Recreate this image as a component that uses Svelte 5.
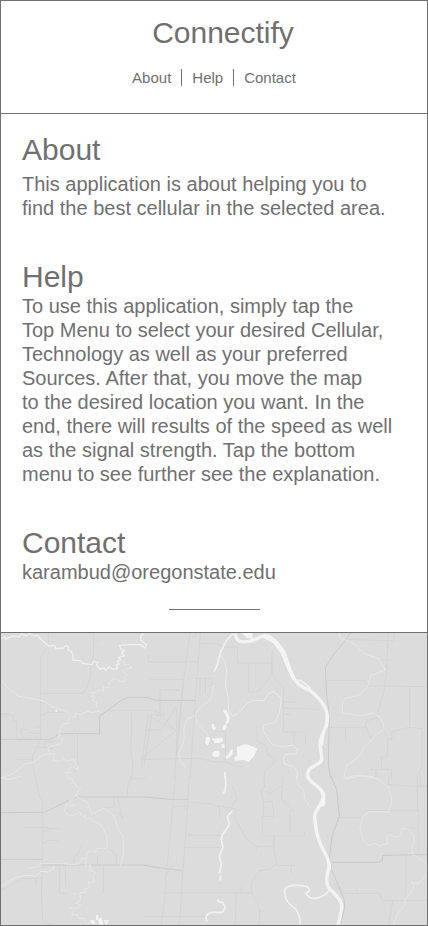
<script>
  const links = [
    { label: 'About', href: '#about' },
    { label: 'Help', href: '#help' },
    { label: 'Contact', href: '#contact' }
  ];
</script>

<div class="app">
  <header>
    <h1>Connectify</h1>
    <nav aria-label="Main">
      {#each links as link}
        <a href={link.href}>{link.label}</a>
      {/each}
    </nav>
  </header>

  <main>
    <section id="about" class="spaced">
      <h2>About</h2>
      <p>This application is about helping you to<br />find the best cellular in the selected area.</p>
    </section>
    <section id="help">
      <h2>Help</h2>
      <p>
        To use this application, simply tap the<br />Top Menu to select your desired Cellular,<br />Technology
        as well as your preferred<br />Sources. After that, you move the map<br />to the desired location you want.
        In the<br />end, there will results of the speed as well<br />as the signal strength. Tap the bottom<br />menu
        to see further see the explanation.
      </p>
    </section>
    <section id="contact">
      <h2>Contact</h2>
      <p><a href="mailto:karambud@oregonstate.edu">karambud@oregonstate.edu</a></p>
    </section>
    <hr />
  </main>

  <svg class="map" viewBox="3 15 1278 876" role="img" aria-label="Map">
    <rect x="0" y="0" width="1284" height="900" fill="#dcdcdc" />

    <!-- north west -->
    <g>
      <g class="road">
        <path d="M145 15V55L122 84V335L98 382L97 405L106 450" />
        <path d="M122 196H248L258 184L272 144V110L280 90V15M280 34L296 39" />
        <path d="M445 82V102H594M452 154H550M600 46H642M586 151H634V172L622 176M616 151V198L628 205M600 151V204" />
        <path d="M3 334H150L180 317H299V264L330 242L366 215L384 208H440L467 217H586" class="major" />
        <path d="M320 248H470V265M395 250L393 380L398 400L396 450M232 317V406M122 263L145 253H190M3 258H22L14 270M22 258L40 265V280H50V334M75 332L63 317V304H82L96 316H122M46 394H96M108 358H136M134 340H158V360H134ZM105 294L121 300" />
        <path d="M480 263V186H540M444 264L424 416M442 262L528 308L426 390M472 250L528 308M440 306L482 306L512 264L526 238M455 258L432 416M468 264L494 256M482 250V266M490 250V266" />
        <path d="M424 394L600 391L642 402M530 238V390" />
        <path d="M601 15L586 217L574 392L571 450M570 15L545 200L528 390L523 450M550 165L530 380M576 28L590 22" />
      </g>
      <path class="creek strong" d="M3 32L14 26L16 34L38 24L56 26L66 17L78 24L88 16L102 24L112 22L122 34L133 42L146 54L164 52L168 62L190 60L198 53L206 57L204 66L214 70L220 84L218 96L240 98L250 106L276 110L280 100L294 103L290 112L300 123L312 120L318 127L328 116L338 124L352 122L350 110L358 110L352 100L362 96L355 88L374 84L364 76L372 68L362 62L358 52L386 50H420L434 60L440 51L432 44L422 36V26L430 16" />
      <path class="creek" d="M366 98L374 104L370 112L384 108L396 119L382 122L366 126L374 136L382 142L374 146L376 158L366 162L346 150L334 156L326 168L328 180L310 176L312 188L294 186L284 194L274 192L282 202L274 206L288 208L276 216L288 220L290 236L298 250L276 254L264 250L240 260L226 254L226 270L212 262L208 268L204 286L190 288L180 302V316L174 328L188 332L182 346L164 352L144 358L148 376L164 378L158 398L182 400L190 392L200 400L222 394L230 410L234 425L216 416L204 424L212 434L196 434L206 446" />
      <path class="creek" d="M3 155L20 176L56 205L100 212L132 220L162 238L200 250L212 264M3 450L40 437L76 408L100 402L130 380L150 380" />
      <path class="creek" d="M642 170L632 214L600 240L586 260L592 290L620 314L630 340M582 264L560 274L552 300V338L536 380L542 400L558 420" />
      <path class="water" d="M166 246L172 245V251L167 252ZM635 290L642 287V305L636 302ZM618 328L628 326L630 336L624 354L616 346ZM635 333L642 331V340ZM636 374L642 372V386L637 384Z" />
    </g>

    <!-- north east -->
    <g transform="translate(642 0)">
      <g class="road">
        <path d="M0 44L34 57H70V105H174V138L208 180V312H274V348M174 70V138L134 190L104 193V105M208 222H246M208 241L316 244M208 259H228M232 312V320M240 312V348" />
        <path d="M408 15L394 38L360 78L334 118L338 200L346 260L343 412L350 450" class="major" />
        <path d="M402 34L520 38H540V15M522 15L518 130L510 190L488 268L510 310L520 332L534 336V310L587 298L624 302V420L616 430L618 450" />
        <path d="M338 157H450L462 174L642 176M587 176V298M500 96H520M344 298H452M394 298V342M488 270L460 278L454 292L470 332M520 336V386H502V424H470M486 424V450M502 424H532V450" />
        <path d="M127 292L130 340L160 356L158 376L182 392L174 412L152 428V450M0 310H34V400L60 414L90 416M0 402H34M344 360L330 366M520 54L534 68" />
      </g>
      <path class="creek" d="M376 15L376 28L394 36L424 50L452 78L494 92L514 126L470 142L460 178L434 202L396 210L386 222L384 254L440 263L480 254L490 264H496L508 284V306L494 314L448 360L440 380L396 414L390 450M396 448L430 442L480 446" />
      <path class="creek mid" d="M20 80L34 104L38 134L34 168L42 206L44 248L56 264L72 256L100 226L122 216L150 218L164 196L178 191L202 210L196 256L184 284L148 290L146 306L174 348L196 356L238 352L252 366L246 378L216 378L208 392L212 408L240 416L250 430V450" />
      <path class="creek river-thin" d="M58 17L38 36L20 72L10 110L0 132" />
      <path class="river" d="M64 16C66 40 80 43 96 41C122 42 134 22 152 24C178 28 188 44 200 60C222 90 224 128 240 152C258 182 276 178 294 192C326 220 340 244 340 266C342 296 318 326 318 348C318 370 326 382 322 398C310 418 280 410 280 446" />
      <path class="water" d="M82 15H114L117 33L100 30ZM142 26L162 18L190 38L214 70L232 124L246 152L235 156L220 124L200 76L178 46ZM318 330L332 305L328 350L320 358ZM336 250L346 262L342 298L334 300Z" />
      <path class="creek river-thin" d="M240 158H262L290 182" />
      <path class="water" d="M26 246L36 245L47 266L44 286L34 288L39 270ZM28 292L38 289V300L30 307L25 304ZM0 293L6 300L3 306H0ZM0 332L24 329L28 338L16 345L0 346ZM22 348L32 350V360L23 359ZM0 369L14 368L18 378L12 387L0 386ZM50 366L57 364L55 380L44 390L36 392L34 386L44 378ZM68 357L96 348L130 362L120 384L104 402L88 396L64 399L60 390L70 382Z" />
      <path class="creek river-thin" d="M32 432L34 450" />
    </g>

    <!-- south west -->
    <g transform="translate(0 444)">
      <g class="road">
        <path d="M106 0L118 60L128 76V268L124 350L128 432L138 443L158 446" />
        <path d="M3 110L134 109L220 66L232 63H440L510 70H563M3 250H128M128 267H430L470 274L549 284" class="major" />
        <path d="M69 155H128L178 158M128 167L160 158M128 203L146 193H174M68 307H124M108 307V328M3 342L40 324L68 307M178 267V352H202M196 267V332M310 267V352M244 210L232 236L222 242V267M326 216L350 238V267M292 240V267" />
        <path d="M394 0L382 36V63M394 8H432L440 0M342 66V92L310 96M354 66L368 128L356 110M563 78L642 84M560 177H642M554 214H642M494 351H642M430 421H642" />
        <path d="M568 0L563 90L549 284L538 446M527 0L520 70L500 284L494 370L484 446M520 92H554V100H562V88H554M498 278L508 280L502 296" />
      </g>
      <path class="creek" d="M196 0L204 8L220 10L216 22L226 20L228 30L242 36L232 44L228 60L210 72L212 82L224 86L218 92L198 84L192 106L210 120L228 116L238 108L248 122L258 118L256 130L270 126L280 134L306 150L320 180L322 216L290 218L286 230L272 224L258 232L262 246L250 246L234 264L214 266L190 263L120 262L106 274L82 276M228 60L248 72L262 78L276 114L312 96L344 122L354 158L370 182V230L362 272" />
      <path class="creek mid" d="M3 332L40 308L76 298H96L104 302L122 286L146 288L160 278L162 268M3 4L24 10L40 8L62 0" />
      <path class="creek" d="M256 248L258 272L272 266L270 284L286 290L278 304L284 318L264 320L270 334L252 340L260 348L240 350L242 372L226 382L242 386L230 398L210 394L222 406L214 418L232 414L236 428L252 426L256 438L270 444M218 352L230 354" />
      <path class="water" d="M288 418L294 416L296 428L288 432ZM270 434L280 431L288 444H276ZM294 432L304 424L310 446H298ZM312 433L328 432L318 446Z" />
      <path class="creek river-thin" d="M642 409C624 408 612 420 622 436" />
    </g>

    <!-- south east -->
    <g transform="translate(642 444)">
      <g class="road">
        <path d="M350 0L368 40L376 120L354 180L346 250L352 278L390 370L392 394L380 446" class="major" />
        <path d="M352 259H494L506 252V238L642 236" class="major" />
        <path d="M374 125H436L456 103H614V236M524 0V26L614 31H642M610 0V103M619 4V30H642M575 236V373M578 153L608 158M380 352H496L506 373H642M428 332V352M536 373L524 446" />
        <path d="M150 0L152 34L142 44L148 80L174 74L180 121H146V180H272V166M148 80V121M152 46L168 54L190 38L206 28V0M206 28L202 70L238 104H228V168M0 88L54 96L76 103M64 104V128L96 188L124 211H178M128 211V226M180 180V220L188 264L168 280L136 284L112 322L114 354L128 372L136 402V446M136 402L150 408M188 268H242M232 268V294M0 351H112M66 351L64 446M82 324V351M56 30L68 68L54 90M14 88L18 130M0 178L22 179M0 214H18" />
        <path d="M356 290L380 340M362 325H376M364 336H382" />
      </g>
      <path class="creek" d="M388 4L400 8L440 0L492 8L526 38L534 76L524 108L468 106L446 120L438 156L446 190L462 208L486 202L494 210L522 202L518 182L528 176L546 184L560 180L564 160L580 158L602 182L596 208L594 234L624 252L640 268V294L612 324L592 318L600 330L592 346L574 370L570 392L550 412L538 446M246 0L252 26L268 40L274 72L292 98" />
      <path class="creek river-thin" d="M34 0L36 26L32 46L25 54M54 106L40 122L46 146L24 178L22 194L27 214L16 242L22 266L16 292M20 298L18 314M0 409H26L34 394L26 380L12 376L11 370" />
      <path class="creek river-thin" d="M346 342C326 370 288 376 276 352C284 348 292 344 280 332C252 326 212 326 212 344C212 374 226 384 246 400C258 420 260 434 258 446" />
      <path class="river" d="M280 0C292 28 326 32 328 58C326 88 302 100 302 122C304 166 316 202 330 226C346 250 344 260 346 270C332 310 338 330 350 342C374 364 388 380 382 402L373 446" />
      <path class="water" d="M318 38L334 52V88L324 92L316 90L326 70ZM338 246L350 260L352 280L342 286Z" />
    </g>
  </svg>
</div>

<style>
  :global(body) {
    margin: 0;
    background: #fff;
  }

  .app {
    box-sizing: border-box;
    border: 1px solid #707070;
    background: #fff;
    color: #707070;
    font-family: 'Helvetica Neue', 'Liberation Sans', Arial, sans-serif;
  }

  h1,
  h2,
  p {
    margin: 0;
    font-weight: 400;
  }

  h1,
  h2 {
    font-size: 30px;
    line-height: 34px;
  }

  a {
    color: inherit;
    text-decoration: none;
  }

  header {
    display: flex;
    flex-direction: column;
    align-items: center;
    gap: 19px;
    padding: 15px 0 27px;
    border-bottom: 1px solid #707070;
  }

  h1 {
    padding-left: 18px;
  }

  nav {
    display: flex;
    font-size: 15px;
    line-height: 17px;
  }

  nav a {
    padding: 0 10px;
  }

  nav a + a {
    border-left: 1px solid #707070;
  }

  main {
    display: flex;
    flex-direction: column;
    gap: 40px;
    padding: 19px 21px 22px;
  }

  .spaced h2 {
    margin-bottom: 5px;
  }

  p {
    font-size: 20px;
    line-height: 24px;
  }

  hr {
    width: 91px;
    height: 1px;
    margin: -15px auto 0;
    border: 0;
    background: #707070;
  }

  .map {
    display: block;
    width: 100%;
    height: auto;
    border-top: 1px solid #707070;
  }

  .map path {
    fill: none;
    stroke-linejoin: round;
  }

  .road path {
    stroke: #d2d2d2;
    stroke-width: 2.5;
  }

  .road .major {
    stroke: #cacaca;
    stroke-width: 3;
  }

  .map .creek {
    stroke: #e7e7e7;
    stroke-width: 3;
  }

  .map .mid {
    stroke: #ebebeb;
  }

  .map .strong {
    stroke: #f0f0f0;
    stroke-width: 4;
  }

  .map .river-thin {
    stroke: #f1f1f1;
    stroke-width: 5;
  }

  .map .river {
    stroke: #f3f3f3;
    stroke-width: 10;
  }

  .map .water {
    fill: #f4f4f4;
  }
</style>
